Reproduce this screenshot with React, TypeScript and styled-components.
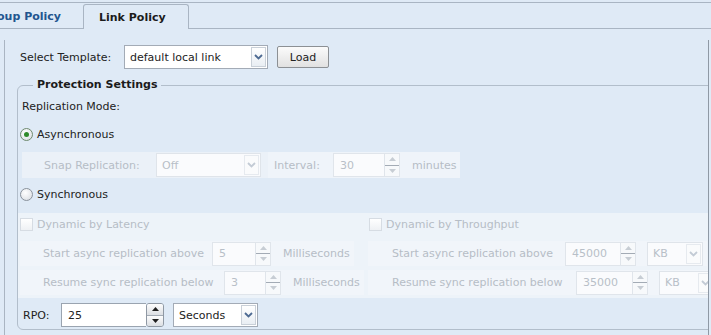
import React from "react";
import styled, { createGlobalStyle, css } from "styled-components";

const Global = createGlobalStyle`
  html, body {
    margin: 0;
    padding: 0;
    background: #dfeaf6;
    overflow: hidden;
  }
  body {
    font-family: "DejaVu Sans", Verdana, sans-serif;
    font-size: 11px;
    color: #222;
  }
`;

const Page = styled.div`
  width: 711px;
  height: 335px;
  overflow: hidden;
`;

const TabStrip = styled.div`
  margin-top: 2px;
  height: 25px;
  border-top: 1px solid #a9b5c3;
  border-bottom: 1px solid #a9b5c3;
  display: flex;
  align-items: flex-end;
`;

const Tab = styled.div<{ $active?: boolean }>`
  box-sizing: border-box;
  display: flex;
  align-items: center;
  font-weight: bold;
  white-space: nowrap;
  ${(p) =>
    p.$active
      ? css`
          width: 106px;
          height: 25px;
          margin-bottom: -1px;
          padding-left: 15px;
          color: #1b1b1b;
          background: #dfeaf6;
          border: 1px solid #a9b5c3;
          border-bottom: none;
          border-radius: 3px 3px 0 0;
        `
      : css`
          width: 101px;
          height: 24px;
          margin-left: -18px;
          padding-right: 22px;
          justify-content: flex-end;
          color: #22558f;
        `}
`;

const Panel = styled.div`
  margin: 11px 2px 0 4px;
  height: 295px;
  box-sizing: border-box;
  padding-top: 5px;
  border-left: 1px solid #aab5c2;
  border-right: 1px solid #8f99a5;
  overflow: hidden;
`;

const TemplateRow = styled.div`
  display: flex;
  align-items: center;
  height: 24px;
  padding-left: 15px;
`;

const Label = styled.span<{ $w?: number; $off?: boolean }>`
  flex: none;
  white-space: nowrap;
  ${(p) => p.$w !== undefined && `width: ${p.$w}px;`}
  color: ${(p) => (p.$off ? "#b6bdc6" : "#222")};
`;

const SelectBox = styled.div<{ $w: number; $off?: boolean; $ml?: number }>`
  box-sizing: border-box;
  flex: none;
  width: ${(p) => p.$w}px;
  height: 24px;
  margin-left: ${(p) => p.$ml ?? 0}px;
  display: flex;
  align-items: center;
  padding-left: 5px;
  border: 1px solid ${(p) => (p.$off ? "#dfe4ea" : "#a3abb6")};
  background: ${(p) => (p.$off ? "#fafbfd" : "#fff")};
  color: ${(p) => (p.$off ? "#b8bfc8" : "#222")};
`;

const SelectButton = styled.span<{ $off?: boolean }>`
  box-sizing: border-box;
  margin-left: auto;
  margin-right: 1px;
  width: 15px;
  height: 20px;
  display: flex;
  align-items: center;
  justify-content: center;
  border: 1px solid ${(p) => (p.$off ? "#e6eaef" : "#c9d0d8")};
  background: ${(p) =>
    p.$off ? "#fafbfc" : "linear-gradient(#ffffff, #e9eef3)"};
`;

const Button = styled.button`
  box-sizing: border-box;
  width: 52px;
  height: 22px;
  margin-left: 9px;
  padding: 0;
  font: inherit;
  color: #222;
  border: 1px solid #8c9094;
  border-radius: 2px;
  background: linear-gradient(#fbfbfb, #e1e1e1);
`;

const Fieldset = styled.fieldset`
  margin: 8px 0 0 12px;
  width: 720px;
  min-width: 0;
  padding: 0 0 1px 4px;
  border: 1px solid #b2becb;
  border-radius: 6px;
`;

const Legend = styled.legend`
  margin-left: 11px;
  padding: 0 4px;
  line-height: 16px;
  font-weight: bold;
  color: #1b1b1b;
`;

const Line = styled.div<{ $h: number; $mt: number }>`
  display: flex;
  align-items: center;
  height: ${(p) => p.$h}px;
  margin-top: ${(p) => p.$mt}px;
`;

const Radio = styled.span<{ $on?: boolean }>`
  box-sizing: border-box;
  flex: none;
  width: 13px;
  height: 13px;
  margin: 0 4px 0 -2px;
  border-radius: 50%;
  border: 1px solid ${(p) => (p.$on ? "#6f8a6f" : "#8a929c")};
  background: radial-gradient(circle at 40% 35%, #ffffff, #d6dadf);
  display: flex;
  align-items: center;
  justify-content: center;
  &::after {
    content: "";
    display: ${(p) => (p.$on ? "block" : "none")};
    width: 5px;
    height: 5px;
    border-radius: 50%;
    background: #2f8a2a;
  }
`;

const SnapPanel = styled.div`
  box-sizing: border-box;
  width: 438px;
  height: 26px;
  margin-top: 7px;
  padding-left: 22px;
  display: flex;
  align-items: center;
  background: #ebf1f8;
`;

const IntervalBox = styled.div`
  margin-left: 7px;
  height: 100%;
  flex: 1;
  display: flex;
  align-items: center;
  padding-left: 6px;
  background: #eff4fa;
`;

const TextInput = styled.div<{ $w: number; $off?: boolean }>`
  box-sizing: border-box;
  flex: none;
  width: ${(p) => p.$w}px;
  height: 24px;
  padding-left: 6px;
  display: flex;
  align-items: center;
  border: 1px solid ${(p) => (p.$off ? "#e0e5eb" : "#9aa4b0")};
  border-right: none;
  background: ${(p) => (p.$off ? "#fafbfd" : "#fff")};
  color: ${(p) => (p.$off ? "#b8bfc8" : "#222")};
`;

const Spin = styled.div<{ $w: number; $off?: boolean }>`
  box-sizing: border-box;
  flex: none;
  width: ${(p) => p.$w}px;
  height: 24px;
  display: flex;
  flex-direction: column;
  border: 1px solid ${(p) => (p.$off ? "#e0e5eb" : "#8f98a3")};
  border-radius: ${(p) => (p.$off ? "0" : "3px")};
  overflow: hidden;
`;

const SpinHalf = styled.span<{ $off?: boolean }>`
  flex: 1;
  display: flex;
  align-items: center;
  justify-content: center;
  background: ${(p) =>
    p.$off ? "#f7f9fb" : "linear-gradient(#fdfdfd, #dcdfe3)"};
  & + & {
    border-top: 1px solid ${(p) => (p.$off ? "#e6eaef" : "#a3abb5")};
  }
`;

const Unit = styled.span<{ $ml: number }>`
  margin-left: ${(p) => p.$ml}px;
  white-space: nowrap;
  color: #b6bdc6;
`;

const DynamicPanel = styled.div`
  margin-left: -4px;
  margin-top: 8px;
  height: 85px;
  display: grid;
  grid-template-columns: 350px 1fr;
  background: #edf3f9;
`;

const DynCol = styled.div<{ $pl: number }>`
  display: flex;
  flex-direction: column;
  padding-left: ${(p) => p.$pl}px;
`;

const CheckRow = styled.div`
  display: flex;
  align-items: center;
  height: 22px;
`;

const Check = styled.span`
  box-sizing: border-box;
  flex: none;
  width: 13px;
  height: 13px;
  margin-right: 4px;
  border: 1px solid #d6dce3;
  background: linear-gradient(#ffffff, #eef1f4);
`;

const SubRow = styled.div<{ $pl: number; $mt: number }>`
  align-self: flex-start;
  display: flex;
  align-items: center;
  height: 25px;
  margin-top: ${(p) => p.$mt}px;
  padding: 0 4px 0 ${(p) => p.$pl}px;
  background: #f1f5fa;
  white-space: nowrap;
`;

const RpoRow = styled.div`
  display: flex;
  align-items: center;
  height: 26px;
  margin-top: 4px;
  padding-left: 1px;
`;

const Chevron = ({ off }: { off?: boolean }) => (
  <svg width="9" height="6" viewBox="0 0 9 6">
    <path
      d="M1 1 L4.5 4.5 L8 1"
      fill="none"
      stroke={off ? "#c3cbd5" : "#4d6a92"}
      strokeWidth="1.8"
    />
  </svg>
);

const Arrow = ({ up, off }: { up?: boolean; off?: boolean }) => (
  <svg width="7" height="4" viewBox="0 0 7 4">
    <path
      d={up ? "M0 4 L3.5 0 L7 4 Z" : "M0 0 L3.5 4 L7 0 Z"}
      fill={off ? "#c7cdd4" : "#1f1f1f"}
    />
  </svg>
);

const Select = ({
  w,
  value,
  off,
  ml,
}: {
  w: number;
  value: string;
  off?: boolean;
  ml?: number;
}) => (
  <SelectBox $w={w} $off={off} $ml={ml}>
    {value}
    <SelectButton $off={off}>
      <Chevron off={off} />
    </SelectButton>
  </SelectBox>
);

const Spinner = ({
  w,
  sw,
  value,
  off,
}: {
  w: number;
  sw: number;
  value: string;
  off?: boolean;
}) => (
  <>
    <TextInput $w={w} $off={off}>
      {value}
    </TextInput>
    <Spin $w={sw} $off={off}>
      <SpinHalf $off={off}>
        <Arrow up off={off} />
      </SpinHalf>
      <SpinHalf $off={off}>
        <Arrow off={off} />
      </SpinHalf>
    </Spin>
  </>
);

export default function App() {
  return (
    <Page>
      <Global />
      <TabStrip>
        <Tab>Group Policy</Tab>
        <Tab $active>Link Policy</Tab>
      </TabStrip>
      <Panel>
        <TemplateRow>
          <Label $w={104}>Select Template:</Label>
          <Select w={144} value="default local link" />
          <Button>Load</Button>
        </TemplateRow>

        <Fieldset>
          <Legend>Protection Settings</Legend>
          <Line $h={22} $mt={2}>
            Replication Mode:
          </Line>
          <Line $h={22} $mt={6}>
            <Radio $on />
            Asynchronous
          </Line>
          <SnapPanel>
            <Label $w={112} $off>
              Snap Replication:
            </Label>
            <Select w={105} value="Off" off />
            <IntervalBox>
              <Label $w={59} $off>
                Interval:
              </Label>
              <Spinner w={51} sw={16} value="30" off />
              <Unit $ml={12}>minutes</Unit>
            </IntervalBox>
          </SnapPanel>
          <Line $h={22} $mt={5}>
            <Radio />
            Synchronous
          </Line>

          <DynamicPanel>
            <DynCol $pl={2}>
              <CheckRow>
                <Check />
                <Label $off>Dynamic by Latency</Label>
              </CheckRow>
              <SubRow $pl={23} $mt={6}>
                <Label $w={169} $off>
                  Start async replication above
                </Label>
                <Spinner w={43} sw={16} value="5" off />
                <Unit $ml={12}>Milliseconds</Unit>
              </SubRow>
              <SubRow $pl={23} $mt={4}>
                <Label $w={181} $off>
                  Resume sync replication below
                </Label>
                <Spinner w={41} sw={16} value="3" off />
                <Unit $ml={12}>Milliseconds</Unit>
              </SubRow>
            </DynCol>
            <DynCol $pl={0}>
              <CheckRow style={{ paddingLeft: 1 }}>
                <Check />
                <Label $off>Dynamic by Throughput</Label>
              </CheckRow>
              <SubRow $pl={24} $mt={6}>
                <Label $w={173} $off>
                  Start async replication above
                </Label>
                <Spinner w={55} sw={16} value="45000" off />
                <Select w={56} value="KB" off ml={11} />
              </SubRow>
              <SubRow $pl={24} $mt={4}>
                <Label $w={184} $off>
                  Resume sync replication below
                </Label>
                <Spinner w={56} sw={16} value="35000" off />
                <Select w={56} value="KB" off ml={11} />
              </SubRow>
            </DynCol>
          </DynamicPanel>

          <RpoRow>
            <Label $w={38}>RPO:</Label>
            <Spinner w={85} sw={18} value="25" />
            <Select w={85} value="Seconds" ml={9} />
          </RpoRow>
        </Fieldset>
      </Panel>
    </Page>
  );
}
